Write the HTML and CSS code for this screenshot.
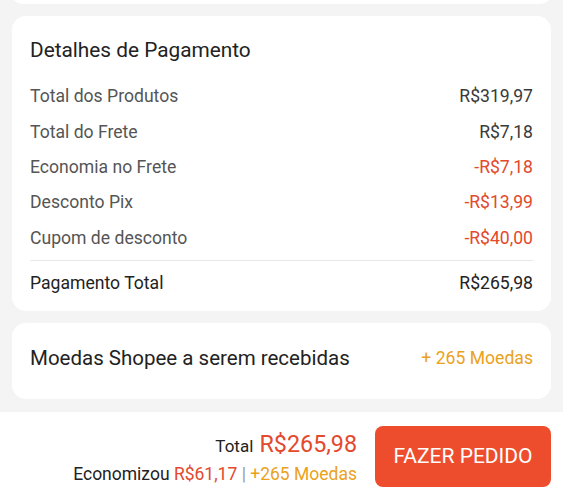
FILE: index.html
```html
<!DOCTYPE html>
<html lang="pt-BR">
<head>
    <meta charset="UTF-8">
    <meta name="viewport" content="width=device-width, initial-scale=1.0">
    <title>Detalhes de Pagamento</title>
    <link rel="stylesheet" href="styles.css">
</head>
<body>

<div class="page">
    <div class="card prev-card"></div>

    <div class="card payment">
        <h2>Detalhes de Pagamento</h2>
        <div class="row"><span>Total dos Produtos</span><span class="value">R$319,97</span></div>
        <div class="row"><span>Total do Frete</span><span class="value">R$7,18</span></div>
        <div class="row"><span>Economia no Frete</span><span class="value red">-R$7,18</span></div>
        <div class="row"><span>Desconto Pix</span><span class="value red">-R$13,99</span></div>
        <div class="row"><span>Cupom de desconto</span><span class="value red">-R$40,00</span></div>
        <div class="row total"><span>Pagamento Total</span><span class="value">R$265,98</span></div>
    </div>

    <div class="card coins">
        <span>Moedas Shopee a serem recebidas</span>
        <span class="orange">+ 265 Moedas</span>
    </div>
</div>

<div class="footer">
    <div class="summary">
        <div class="sum-total">Total <span class="red big">R$265,98</span></div>
        <div class="sum-saved">Economizou <span class="red">R$61,17</span> <span class="sep">|</span> <span class="orange">+265 Moedas</span></div>
    </div>
    <button class="order-btn">FAZER PEDIDO</button>
</div>

</body>
</html>
```

FILE: styles.css
```css
body {
    margin: 0;
    font-family: Roboto, sans-serif;
    background-color: #f4f4f4;
    color: #222;
    height: 500px;
    overflow: hidden;
}
.page {
    display: flow-root;
    height: 412px;
}
.card {
    background-color: #fff;
    border-radius: 14px;
    margin: 12px 12px 0;
}
.prev-card {
    height: 20px;
    margin-top: -16px;
}
.payment {
    margin-top: 12px;
    padding: 20px 18px 10px;
}
.payment h2 {
    margin: 0 0 14.6px;
    font-size: 20.8px;
    font-weight: 400;
    line-height: 28px;
    color: #222;
}
.row {
    display: flex;
    justify-content: space-between;
    align-items: center;
    height: 35.4px;
    font-size: 17.6px;
    color: #555;
}
.row .value {
    color: #3a3a3a;
}
.row.total {
    border-top: 1px solid #e8e8e8;
    margin-top: 4.4px;
    padding-top: 4.6px;
    color: #222;
}
.row.total .value {
    color: #222;
}
.red {
    color: #e2492d !important;
}
.orange {
    color: #eaa21c;
}
.coins {
    box-sizing: border-box;
    height: 76px;
    padding: 0 18px 6px;
    display: flex;
    justify-content: space-between;
    align-items: center;
    font-size: 20.5px;
}
.coins .orange {
    font-size: 17.6px;
}
.footer {
    background-color: #fff;
    height: 88px;
    display: flex;
    align-items: center;
    justify-content: flex-end;
    padding: 0 12px;
    gap: 18px;
}
.summary {
    text-align: right;
    padding-top: 3px;
}
.sum-total {
    font-size: 17px;
    line-height: 30px;
}
.big {
    font-size: 23.3px;
    margin-left: 2px;
}
.sum-saved {
    font-size: 17.5px;
    line-height: 26px;
}
.sep {
    color: #999;
}
.order-btn {
    width: 176px;
    height: 61px;
    background-color: #ee4d2d;
    color: #fff;
    border: none;
    border-radius: 8px;
    font-family: Roboto, sans-serif;
    font-size: 21px;
    cursor: pointer;
}
```
